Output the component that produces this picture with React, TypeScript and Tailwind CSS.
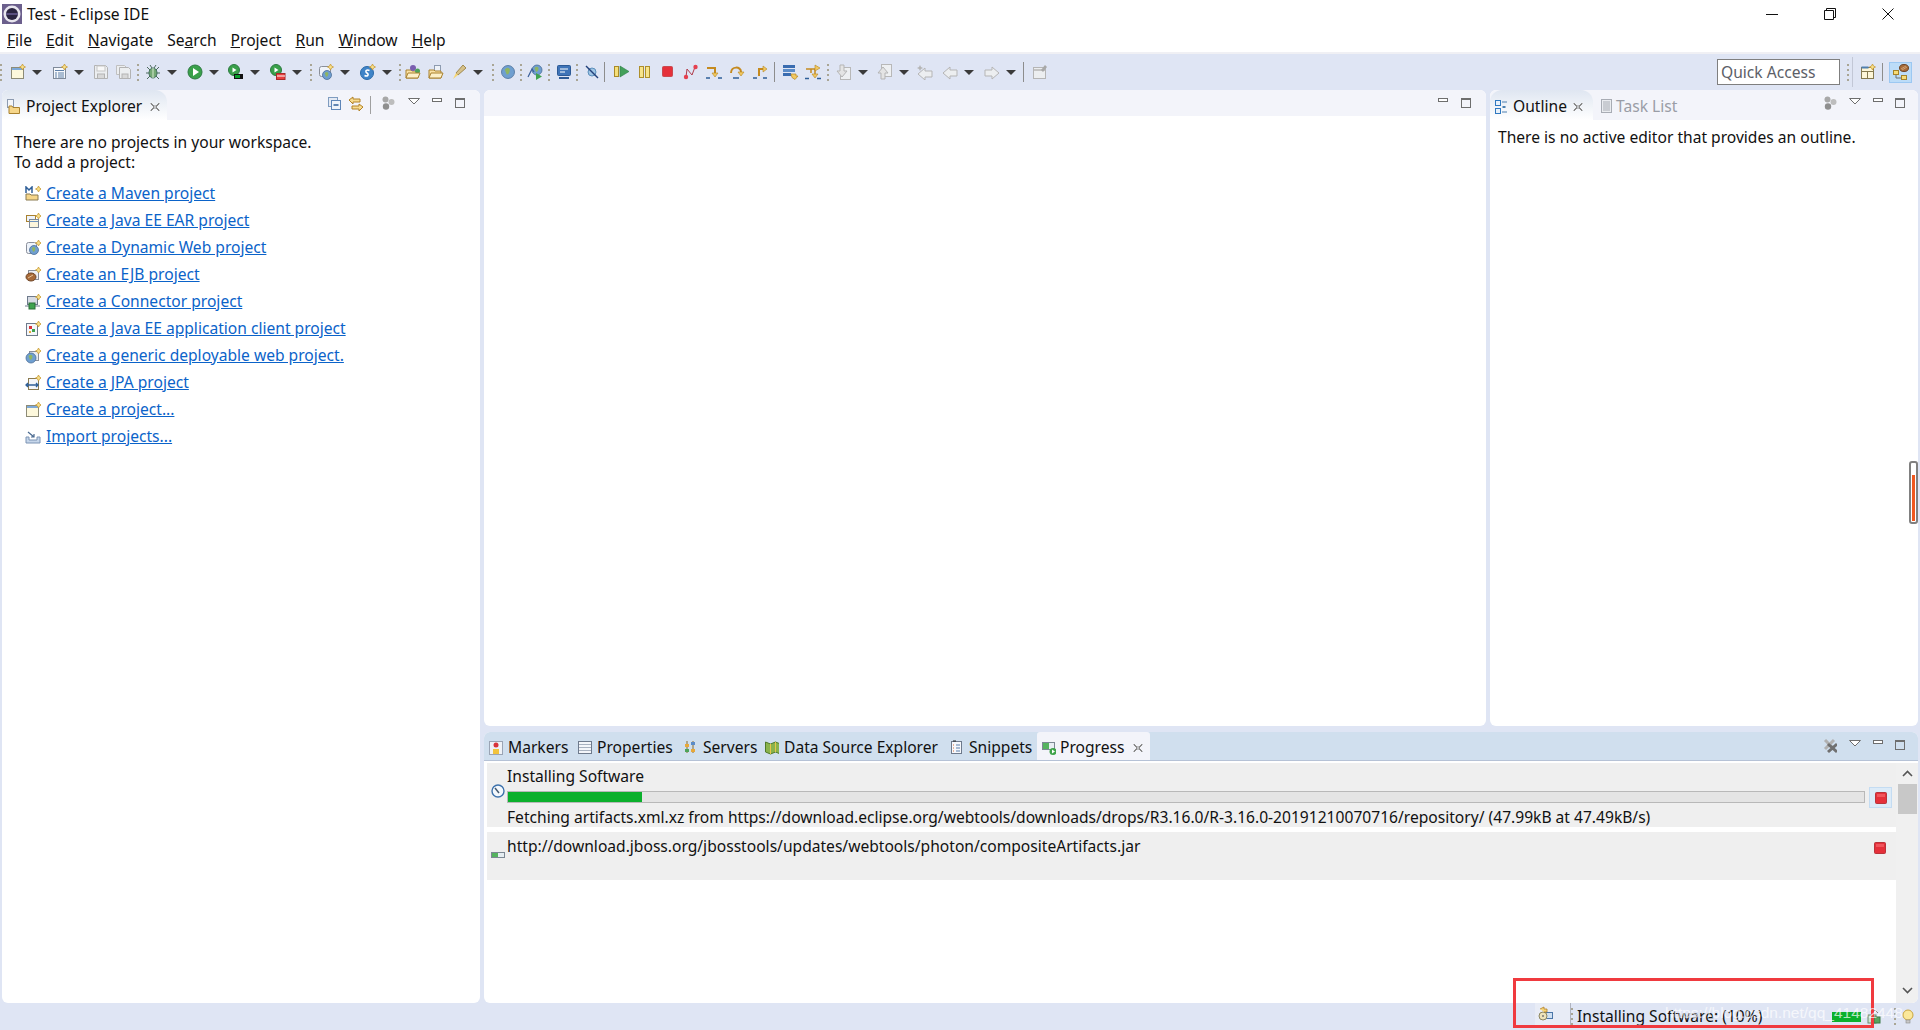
import React from "react";

const S = ({ w = 16, h = 16, children }: { w?: number; h?: number; children?: React.ReactNode }) => (
  <svg width={w} height={h} viewBox={`0 0 ${w} ${h}`} className="shrink-0 block">
    {children}
  </svg>
);

const Star = ({ x = 0, y = 0 }: { x?: number; y?: number }) => (
  <path
    transform={`translate(${x} ${y})`}
    d="M12.5 0l1 2 2 1-2 1-1 2-1-2-2-1 2-1z"
    fill="#f8e08a"
    stroke="#c4932a"
    strokeWidth=".7"
  />
);

const Globe = ({ cx = 8, cy = 8, r = 6 }: { cx?: number; cy?: number; r?: number }) => (
  <g>
    <circle cx={cx} cy={cy} r={r} fill="#6f9fd0" stroke="#4b6f98" strokeWidth=".8" />
    <path d={`M${cx - r * 0.5} ${cy - r * 0.4}q${r * 0.5} ${-r * 0.5} ${r * 0.8} 0q0 ${r * 0.7} ${-r * 0.5} ${r * 0.8}z`} fill="#8fb562" />
  </g>
);

const Stop = () => (
  <S w={12} h={12}>
    <rect x=".5" y=".5" width="11" height="11" rx="1" fill="#e5303a" stroke="#b9333a" />
    <rect x="2" y="2" width="8" height="3" fill="#f0555c" />
  </S>
);

const icons: Record<string, React.ReactNode> = {
  newWin: (
    <>
      <rect x="1.5" y="3.5" width="12" height="11" fill="#fdf8dc" stroke="#8d8b76" />
      <rect x="2" y="4" width="11" height="2" fill="#7ea9d8" />
      <Star />
    </>
  ),
  newForm: (
    <>
      <rect x="1.5" y="3.5" width="12" height="11" fill="#f6f8fc" stroke="#7f8a9a" />
      <path d="M3 6.5h9M6 9h6M6 11h6M6 13h6M3 9h2M3 11h2M3 13h2" stroke="#5f80a8" />
      <Star />
    </>
  ),
  save: (
    <>
      <path d="M1.5 1.5h11l2 2v11h-13z" fill="#eceef0" stroke="#b3b3b3" />
      <rect x="4" y="2" width="8" height="5" fill="#f8f8f8" stroke="#c6c6c6" />
      <rect x="4.500" y="10" width="7" height="4.500" fill="#d8d8d8" stroke="#b3b3b3" />
    </>
  ),
  saveAll: (
    <>
      <path d="M.5 1.500h8l2 2v7h-10z" fill="#eceef0" stroke="#c0c0c0" />
      <path d="M3.500 3.500h9l2 2v9h-11z" fill="#eceef0" stroke="#b3b3b3" />
      <rect x="6" y="10" width="6" height="4.500" fill="#d8d8d8" stroke="#b3b3b3" />
    </>
  ),
  bug: (
    <>
      <path d="M2 3l3 3M14 3l-3 3M1 9h3M15 9h-3M2 15l3-3M14 15l-3-3M5 1l2 3M11 1L9 4" stroke="#4d6a5e" strokeWidth="1" />
      <ellipse cx="8" cy="9" rx="4" ry="5" fill="#74a873" stroke="#3f6e58" />
      <path d="M8 4v10" stroke="#d8ead0" />
    </>
  ),
  run: (
    <>
      <circle cx="8" cy="8" r="7" fill="#39a04a" stroke="#2c7a41" />
      <path d="M6 4l6 4-6 4z" fill="#fff" />
    </>
  ),
  runExt: (
    <>
      <circle cx="6" cy="6" r="5.500" fill="#39a04a" stroke="#2c7a41" />
      <path d="M4.500 3.500l4 2.500-4 2.500z" fill="#fff" />
      <rect x="6" y="10" width="9" height="5" fill="#111" />
      <rect x="7" y="11" width="5" height="3" fill="#0aa02c" />
    </>
  ),
  runTool: (
    <>
      <circle cx="6" cy="6" r="5.500" fill="#39a04a" stroke="#2c7a41" />
      <path d="M4.500 3.500l4 2.500-4 2.500z" fill="#fff" />
      <rect x="6.500" y="9.500" width="8.500" height="6" fill="#e8403f" stroke="#a82a2a" />
      <path d="M7 12h8" stroke="#fff" />
    </>
  ),
  newWeb: (
    <>
      <rect x="1.500" y="2.500" width="11" height="10" fill="#f0f4fa" stroke="#8a8f9a" rx="2" />
      <Globe cx={9} cy={11} r={4.500} />
      <Star />
    </>
  ),
  newS: (
    <>
      <circle cx="7" cy="9" r="6.500" fill="#3f84c8" stroke="#2b6aa8" />
      <path d="M9.500 6.500c-3-1.500-5 1-2.500 2.500s.5 4-2.500 2.500" fill="none" stroke="#fff" strokeWidth="1.500" />
      <Star />
    </>
  ),
  openType: (
    <>
      <path d="M1 6h5l1 1h6v7H1z" fill="#fbe2a4" stroke="#a9812f" />
      <circle cx="8" cy="4" r="3" fill="#7a5fb0" />
      <circle cx="12.500" cy="7" r="2.500" fill="#4fa35a" />
      <path d="M1 14l2-5h12l-2 5z" fill="#fdf0c8" stroke="#a9812f" />
    </>
  ),
  openFile: (
    <>
      <rect x="6.500" y="1.500" width="6" height="6" fill="#eef2f8" stroke="#8d9bb0" />
      <path d="M1 6h5l1 1h6v7H1z" fill="#fbe2a4" stroke="#a9812f" />
      <path d="M1 14l2-5h12l-2 5z" fill="#fdf0c8" stroke="#a9812f" />
    </>
  ),
  torch: (
    <>
      <path d="M5 9l7-8 3 3-8 7z" fill="#d6c18a" stroke="#a08a50" />
      <path d="M5 9l2 2-5 4z" fill="#f7d670" />
    </>
  ),
  globe: <Globe r={6.500} />,
  globeRun: (
    <>
      <Globe cx={10} cy={6} r={5} />
      <path d="M1 13l4-8 2 3" fill="none" stroke="#3a5f9a" strokeWidth="1.200" />
      <path d="M9 9l6 3.500-6 3.500z" fill="#3fa34f" />
    </>
  ),
  monitor: (
    <>
      <rect x="1.500" y="1.500" width="13" height="10" rx="1" fill="#3f74b8" stroke="#2d5a96" />
      <path d="M4 5h8M4 8h5" stroke="#fff" />
      <path d="M3 14h10" stroke="#2d5a96" strokeWidth="2" />
    </>
  ),
  skip: (
    <>
      <circle cx="8" cy="8" r="4" fill="#9fc4e4" stroke="#5b8fbc" />
      <path d="M2 2l12 12" stroke="#22407a" strokeWidth="1.400" />
    </>
  ),
  resume: (
    <>
      <rect x=".5" y="2.500" width="4" height="10" fill="#f6e07a" stroke="#a98a28" />
      <path d="M6 2l9 5.500L6 13z" fill="#43a05a" stroke="#2f7d48" strokeWidth=".6" />
    </>
  ),
  pause: (
    <>
      <rect x=".5" y="2.500" width="4" height="11" fill="#f8e48a" stroke="#ae8f2b" />
      <rect x="6.500" y="2.500" width="4" height="11" fill="#f8e48a" stroke="#ae8f2b" />
    </>
  ),
  stop: <rect x=".5" y="2.500" width="10" height="10" rx="1" fill="#e5303a" stroke="#c94a50" />,
  disconnect: (
    <>
      <path d="M3 13l1-8 5 6 3-8" fill="none" stroke="#b03a4a" />
      <circle cx="3" cy="13" r="2.200" fill="#e5404f" />
      <circle cx="12.500" cy="3" r="2.200" fill="#e5404f" />
    </>
  ),
  into: (
    <>
      <path d="M1 4h8v6" fill="none" stroke="#c58a1f" strokeWidth="2" />
      <path d="M6 9h6l-3 4z" fill="#f2c860" stroke="#b5861f" strokeWidth=".6" />
      <path d="M0 14h4M12 14h4" stroke="#2f5f98" strokeWidth="1.500" />
    </>
  ),
  over: (
    <>
      <path d="M2 9C2 2 12 2 12 8" fill="none" stroke="#c58a1f" strokeWidth="2" />
      <path d="M9 8h6l-3 4z" fill="#f2c860" stroke="#b5861f" strokeWidth=".6" />
      <path d="M4 14h6" stroke="#2f5f98" strokeWidth="1.500" />
    </>
  ),
  ret: (
    <>
      <path d="M7 12V5h5" fill="none" stroke="#c58a1f" strokeWidth="2" />
      <path d="M11 2v6l4-3z" fill="#f2c860" stroke="#b5861f" strokeWidth=".6" />
      <path d="M1 14h4M11 14h4" stroke="#2f5f98" strokeWidth="1.500" />
    </>
  ),
  drop: (
    <>
      <rect x="0" y="1" width="12" height="3" fill="#3a6cb0" />
      <rect x="0" y="5" width="12" height="3" fill="#5b8cc8" />
      <rect x="0" y="9" width="8" height="3" fill="#3a6cb0" />
      <path d="M8 10h5v2h2l-3 3.500-3-2z" fill="#f2c860" stroke="#b5861f" strokeWidth=".7" />
    </>
  ),
  filter: (
    <>
      <path d="M1 5h9v7M6 5v4" fill="none" stroke="#c58a1f" strokeWidth="1.500" />
      <path d="M10 1l5 3-5 3z" fill="#f2c860" stroke="#b5861f" strokeWidth=".6" />
      <path d="M7 10h6l-3 4z" fill="#f2c860" stroke="#b5861f" strokeWidth=".6" />
      <path d="M0 14.500h4M12 14.500h4" stroke="#2f5f98" strokeWidth="1.500" />
    </>
  ),
  nextAnn: (
    <>
      <rect x="4.500" y="3.500" width="10" height="12" fill="#eef0f2" stroke="#b8b8b8" />
      <path d="M4 1h4v6h3l-5 6-5-6h3z" fill="#e4e4e4" stroke="#b5b5b5" />
    </>
  ),
  prevAnn: (
    <>
      <rect x="4.500" y=".5" width="10" height="12" fill="#eef0f2" stroke="#b8b8b8" />
      <path d="M4 15h4V9h3L6 3 1 9h3z" fill="#e4e4e4" stroke="#b5b5b5" />
    </>
  ),
  lastEdit: (
    <>
      <path d="M8 4v3h7v6H8v3L1 10z" fill="#eceef0" stroke="#b5b5b5" />
      <path d="M3 1l1 2 2 1-2 1-1 2-1-2-2-1 2-1z" fill="#b5b5b5" />
    </>
  ),
  back: <path d="M8 3v3h7v6H8v3L1 9z" fill="#eceef0" stroke="#b5b5b5" />,
  fwd: <path d="M8 3v3H1v6h7v3l7-6z" fill="#eceef0" stroke="#b5b5b5" />,
  pin: (
    <>
      <rect x="1.500" y="3.500" width="12" height="11" fill="#eceef0" stroke="#b5b5b5" />
      <path d="M2 6h11" stroke="#c4c4c4" strokeWidth="2" />
      <path d="M9 6l4-5 2 2-4 5z" fill="#a8a8a8" />
    </>
  ),
  perspective: (
    <>
      <rect x="1.500" y="3.500" width="12" height="11" fill="#fdf6d8" stroke="#857a50" />
      <path d="M1.500 7.500h12M7.500 7.500v7" stroke="#857a50" />
      <path d="M1.500 3.500h7" stroke="#4f7fb0" strokeWidth="2" />
      <Star />
    </>
  ),
  javaEE: (
    <>
      <rect x=".5" y="6.500" width="5" height="4" fill="#f6dc78" stroke="#a5832a" />
      <rect x="8.500" y="11.500" width="5" height="4" fill="#f6dc78" stroke="#a5832a" />
      <path d="M3 11v3h5" fill="none" stroke="#6e6e6e" />
      <ellipse cx="11" cy="4" rx="4.500" ry="3.500" fill="#a86a38" stroke="#6e4526" />
      <path d="M8 5l5-3M9 6l5-3" stroke="#e5c49a" strokeWidth=".6" />
    </>
  ),
  collapse: (
    <>
      <rect x=".5" y="1.500" width="9" height="9" fill="#e4eaf4" stroke="#7f9cc0" />
      <rect x="3.500" y="4.500" width="9" height="9" fill="#eef3fa" stroke="#5e86b8" />
      <path d="M5.500 9h5" stroke="#2f5f98" strokeWidth="1.400" />
    </>
  ),
  link: (
    <>
      <path d="M1 4l4-3v2h7v3H5v2z" fill="#f8dc90" stroke="#b28226" />
      <path d="M15 11l-4-3v2H4v3h7v2z" fill="#f8dc90" stroke="#b28226" />
    </>
  ),
  cluster: (
    <>
      <circle cx="4.500" cy="3.500" r="3" fill="#a8a8a8" />
      <circle cx="10.500" cy="6" r="3" fill="#bdbdbd" />
      <circle cx="5" cy="10.500" r="3.200" fill="#8f8f8f" />
    </>
  ),
  clearX: (
    <>
      <path d="M2 2l9 9M11 2l-9 9" stroke="#b0b0b0" strokeWidth="3" />
      <path d="M5 6l9 8M14 6l-9 8" stroke="#707070" strokeWidth="3" />
    </>
  ),
  peFolder: (
    <>
      <rect x="1.500" y=".5" width="6" height="8" fill="#f4f6fa" stroke="#8d9bb0" />
      <path d="M3 7h3l1 1.500h6.500V14.500H3z" fill="#f6d68a" stroke="#a9812f" />
    </>
  ),
  outline: (
    <>
      <rect x=".5" y="1.500" width="5" height="5" fill="#e8f1fa" stroke="#2f78c0" />
      <rect x=".5" y="9.500" width="5" height="5" fill="#e8f1fa" stroke="#2f78c0" />
      <path d="M7 3h5M7 13h5" stroke="#4a7fb0" />
      <rect x="7.500" y="7" width="3" height="2" fill="#4a7fb0" />
    </>
  ),
  taskList: (
    <>
      <rect x="2.500" y=".5" width="10" height="13" fill="#eaecf0" stroke="#a8acb4" />
      <path d="M4 3h7M4 5h7M4 7h7M4 9h7M4 11h7" stroke="#a8acb4" />
    </>
  ),
  markers: (
    <>
      <rect x=".5" y="1.500" width="13" height="13" fill="#eef1f6" stroke="#9aa4b4" />
      <circle cx="7" cy="5" r="2.500" fill="#d8333a" />
      <rect x="4" y="9" width="6" height="5" fill="#f2c33c" />
    </>
  ),
  properties: (
    <>
      <rect x=".5" y="1.500" width="13" height="12" fill="#f4f6fa" stroke="#6e7a8c" />
      <path d="M1 4.500h12M1 7.500h12M1 10.500h12" stroke="#a8b2c0" />
    </>
  ),
  servers: (
    <>
      <path d="M3 1v12M9 1v12" stroke="#8a6a2a" />
      <rect x="1" y="4" width="4" height="3" fill="#e8a83a" />
      <rect x="7" y="2" width="4" height="3" fill="#5b8cc8" />
      <rect x="1" y="9" width="4" height="3" fill="#4fa35a" />
      <rect x="7" y="9" width="4" height="3" fill="#e8a83a" />
    </>
  ),
  dse: (
    <>
      <path d="M.5 2l5 2 5-2 5 2v10l-5-2-5 2-5-2z" fill="#8ab34c" stroke="#4f7a2a" />
      <path d="M5.500 4v10M10.500 2v10" stroke="#e7c64a" />
    </>
  ),
  snippets: (
    <>
      <rect x="1.500" y="1.500" width="10" height="12" fill="#f6f8fc" stroke="#6e7a8c" />
      <path d="M3 1h3" stroke="#222" />
      <path d="M6 5h4M6 8h4M6 11h4" stroke="#5b7faa" />
      <path d="M3 5h1M3 8h1M3 11h1" stroke="#d8703a" />
    </>
  ),
  progress: (
    <>
      <rect x=".5" y="2.500" width="12" height="7" fill="#e8eef4" stroke="#7c8894" />
      <rect x="1" y="3" width="6" height="6" fill="#55b35f" />
      <circle cx="11" cy="11.500" r="3.500" fill="#3ea34a" />
      <path d="M10 9.500l3 2-3 2z" fill="#fff" />
    </>
  ),
  clock: (
    <>
      <circle cx="7" cy="7" r="6" fill="#f4f8fc" stroke="#3e72ac" strokeWidth="1.400" />
      <path d="M4 4l4 5" stroke="#44596f" strokeWidth="1.500" />
    </>
  ),
  rowBar: (
    <>
      <rect x=".5" y="6.500" width="13" height="5" fill="#e6eef2" stroke="#7c8894" />
      <rect x="1" y="7" width="6" height="4" fill="#55b35f" />
    </>
  ),
  bgTasks: (
    <>
      <rect x="6.500" y="6.500" width="8" height="6" fill="#cfe0f2" stroke="#4b76a8" />
      <circle cx="5" cy="10" r="4" fill="#eee2b8" stroke="#8a8560" />
      <circle cx="5" cy="10" r="1" fill="#777" />
      <path d="M2 3l4-2v2h3v3H6" fill="#f6d478" stroke="#b28226" strokeWidth=".8" />
    </>
  ),
  trim: (
    <>
      <rect x="1" y="6" width="8" height="8" fill="#cfe3d0" stroke="#6b8a70" />
      <rect x="7" y="8" width="6" height="6" fill="#55a35f" stroke="#3a7a45" />
      <path d="M5 4l3-3 3 3" fill="none" stroke="#808080" />
    </>
  ),
  bulb: (
    <>
      <circle cx="7" cy="6" r="5" fill="#fbe89a" stroke="#c9a540" />
      <rect x="5" y="11" width="4" height="3" fill="#c8c8c8" stroke="#8a8a8a" strokeWidth=".6" />
    </>
  ),
  maven: (
    <>
      <path d="M1 8h4l1 1h7v5H1z" fill="#f6d68a" stroke="#8a7a50" />
      <path d="M1 7V1l3 3 3-3v6" fill="none" stroke="#2f5f98" strokeWidth="1.500" />
      <Star x={1} />
    </>
  ),
  ear: (
    <>
      <rect x="1.500" y="2.500" width="9" height="6" fill="#eef3fa" stroke="#a9812f" />
      <rect x="4.500" y="6.500" width="9" height="8" fill="#fdf6dc" stroke="#7e8a98" />
      <path d="M5 8.500h8" stroke="#6e94c0" />
      <Star x={1} />
    </>
  ),
  web: (
    <>
      <rect x="1.500" y="2.500" width="10" height="11" fill="#eef3fa" stroke="#8a8f9a" rx="2" />
      <Globe cx={9} cy={10} r={4.500} />
      <Star x={1} />
    </>
  ),
  ejb: (
    <>
      <rect x="3.500" y="3.500" width="10" height="9" fill="#eef0f4" stroke="#8a8f9a" />
      <ellipse cx="6" cy="10" rx="5" ry="4" fill="#a86a38" stroke="#6e4526" />
      <path d="M3 11l5-3" stroke="#e5c49a" />
      <Star x={1} />
    </>
  ),
  conn: (
    <>
      <rect x="2.500" y="2.500" width="10" height="8" fill="#d8dce4" stroke="#6e7a8c" />
      <path d="M0 12h15" stroke="#6e7a8c" />
      <rect x="4" y="9" width="6" height="6" fill="#3fa34f" stroke="#2a6e38" />
      <Star x={1} />
    </>
  ),
  client: (
    <>
      <rect x="1.500" y="2.500" width="11" height="12" fill="#f4f6fa" stroke="#6e7a8c" />
      <rect x="4" y="5" width="3" height="3" fill="#d8333a" />
      <rect x="7" y="8" width="3" height="3" fill="#3fa34f" />
      <rect x="4" y="10" width="2" height="2" fill="#e8a83a" />
      <Star x={1} />
    </>
  ),
  generic: (
    <>
      <rect x="4.500" y="3.500" width="9" height="9" fill="#e8ecf2" stroke="#8a8f9a" />
      <Globe cx={6} cy={10} r={5} />
      <Star x={1} />
    </>
  ),
  jpa: (
    <>
      <rect x="3.500" y="3.500" width="10" height="11" fill="#f4f6fa" stroke="#8a7a50" />
      <path d="M1 10h12M3 8l-2 2 2 2M11 8l2 2-2 2" fill="none" stroke="#2f5f98" strokeWidth="1.300" />
      <Star x={1} />
    </>
  ),
  project: (
    <>
      <rect x="1.500" y="3.500" width="12" height="11" fill="#fdf8dc" stroke="#8d8b76" />
      <rect x="2" y="4" width="11" height="2" fill="#7ea9d8" />
      <Star x={1} />
    </>
  ),
  importP: (
    <>
      <path d="M1 8h3v3h8V8h3v6H1z" fill="#c6d6ea" stroke="#7c94b4" />
      <path d="M3 3l6 5M9 5v3H6" fill="none" stroke="#4a6a90" strokeWidth="1.200" />
    </>
  ),
};

const I = ({ n, w = 16, h = 16 }: { n: string; w?: number; h?: number }) => <S w={w} h={h}>{icons[n]}</S>;

const Arrow = () => (
  <span className="ml-[6px] block h-0 w-0 border-x-[5px] border-t-[5px] border-x-transparent border-t-[#3a3a3a]" />
);

const Grip = ({ w }: { w: string }) => (
  <div className={`${w} flex h-[24px] shrink-0 flex-col justify-center gap-[3px]`}>
    {[0, 1, 2, 3].map((d) => (
      <span key={d} className="h-[2px] w-[2px] bg-[#a9a594]" />
    ))}
  </div>
);

const Sep = ({ w }: { w: string }) => (
  <div className={`${w} h-[20px] shrink-0`}>
    <div className="h-full w-px bg-[#8d8d8d]" />
  </div>
);

type Tool = ["g" | "s" | "i" | "a", string, string?];

const tools: Tool[] = [
  ["g", "w-[10px]"],
  ["a", "w-[42px]", "newWin"],
  ["a", "w-[41px]", "newForm"],
  ["i", "w-[23px]", "save"],
  ["i", "w-[21px]", "saveAll"],
  ["g", "w-[8px]"],
  ["a", "w-[42px]", "bug"],
  ["a", "w-[41px]", "run"],
  ["a", "w-[42px]", "runExt"],
  ["a", "w-[40px]", "runTool"],
  ["g", "w-[8px]"],
  ["a", "w-[42px]", "newWeb"],
  ["a", "w-[39px]", "newS"],
  ["g", "w-[6px]"],
  ["i", "w-[23px]", "openType"],
  ["i", "w-[23px]", "openFile"],
  ["a", "w-[41px]", "torch"],
  ["g", "w-[8px]"],
  ["i", "w-[20px]", "globe"],
  ["g", "w-[7px]"],
  ["i", "w-[21px]", "globeRun"],
  ["g", "w-[8px]"],
  ["i", "w-[20px]", "monitor"],
  ["g", "w-[8px]"],
  ["i", "w-[20px]", "skip"],
  ["s", "w-[10px]"],
  ["i", "w-[25px]", "resume"],
  ["i", "w-[23px]", "pause"],
  ["i", "w-[21px]", "stop"],
  ["i", "w-[23px]", "disconnect"],
  ["i", "w-[23px]", "into"],
  ["i", "w-[23px]", "over"],
  ["i", "w-[22px]", "ret"],
  ["s", "w-[9px]"],
  ["i", "w-[22px]", "drop"],
  ["i", "w-[22px]", "filter"],
  ["g", "w-[9px]"],
  ["a", "w-[41px]", "nextAnn"],
  ["a", "w-[40px]", "prevAnn"],
  ["i", "w-[25px]", "lastEdit"],
  ["a", "w-[42px]", "back"],
  ["a", "w-[39px]", "fwd"],
  ["s", "w-[9px]"],
  ["i", "w-[20px]", "pin"],
];

const menus: [string, string, string][] = [
  ["", "F", "ile"],
  ["", "E", "dit"],
  ["", "N", "avigate"],
  ["Se", "a", "rch"],
  ["", "P", "roject"],
  ["", "R", "un"],
  ["", "W", "indow"],
  ["", "H", "elp"],
];

const links: [string, string][] = [
  ["maven", "Create a Maven project"],
  ["ear", "Create a Java EE EAR project"],
  ["web", "Create a Dynamic Web project"],
  ["ejb", "Create an EJB project"],
  ["conn", "Create a Connector project"],
  ["client", "Create a Java EE application client project"],
  ["generic", "Create a generic deployable web project."],
  ["jpa", "Create a JPA project"],
  ["project", "Create a project..."],
  ["importP", "Import projects..."],
];

const bottomTabs: [string, string, string][] = [
  ["markers", "Markers", "ml-[2px] w-[89px]"],
  ["properties", "Properties", "w-[106px]"],
  ["servers", "Servers", "w-[81px]"],
  ["dse", "Data Source Explorer", "w-[185px]"],
  ["snippets", "Snippets", "w-[90px]"],
];

const Close = () => (
  <svg width="10" height="10" viewBox="0 0 10 10" className="shrink-0">
    <path d="M1 1l3 3 2 0 3-3M1 9l3-3 2 0 3 3M1 1l0 1 3 3-3 3 0 1M9 1l0 1-3 3 3 3 0 1" fill="none" stroke="#8a8a8a" />
  </svg>
);

const MinMax = () => (
  <>
    <S w={10}>
      <rect x=".5" y="2.500" width="9" height="3" fill="#fff" stroke="#6e6e6e" />
    </S>
    <S w={10}>
      <rect x=".5" y="2.500" width="9" height="9" fill="none" stroke="#6e6e6e" />
      <path d="M1 3.500h8" stroke="#6e6e6e" />
    </S>
  </>
);

const Tri = () => (
  <S w={12}>
    <path d="M.5 2.500h11L6 8z" fill="#fff" stroke="#6e6e6e" />
  </S>
);

const ViewTools = ({ icon = "cluster" }: { icon?: string }) => (
  <div className="ml-auto flex items-start gap-[12px] pr-[13px] pt-[6px]">
    <I n={icon} w={14} />
    <Tri />
    <MinMax />
  </div>
);

export default function App() {
  return (
    <div className="relative flex h-[1030px] w-[1920px] flex-col overflow-hidden bg-[#dfe5f4] font-['Noto_Sans',sans-serif] text-[15.6px] text-[#111]">
      <div className="flex h-[27px] shrink-0 items-center bg-white pl-[2px]">
        <svg width="20" height="20" viewBox="0 0 20 20" className="shrink-0">
          <rect width="20" height="20" fill="#6b5f8c" />
          <circle cx="10" cy="10" r="8.500" fill="#e8e6ee" />
          <circle cx="10" cy="10" r="6" fill="#2a2440" />
          <path d="M4 9h12v2H4z" fill="#5a5080" />
        </svg>
        <span className="ml-[5px] pt-[2px]">Test - Eclipse IDE</span>
        <div className="ml-auto flex items-center gap-[46px] pr-[26px]">
          <S w={12} h={12}>
            <path d="M0 6.500h12" stroke="#111" />
          </S>
          <S w={12} h={12}>
            <path d="M.5 2.500h9v9h-9zM2.500 2.500v-2h9v9h-2" fill="none" stroke="#111" />
          </S>
          <S w={12} h={12}>
            <path d="M.5.500l11 11M11.500.500l-11 11" stroke="#111" />
          </S>
        </div>
      </div>

      <div className="flex h-[25px] shrink-0 items-center gap-[14px] bg-white pl-[7px] pt-[2px]">
        {menus.map(([a, u, b]) => (
          <span key={u + b}>
            {a}
            <span className="underline">{u}</span>
            {b}
          </span>
        ))}
      </div>

      <div className="flex h-[38px] shrink-0 items-center border-t-2 border-[#f0f0f4]">
        {tools.map(([kind, w, n], idx) => {
          if (kind === "g") return <Grip key={idx} w={w} />;
          if (kind === "s") return <Sep key={idx} w={w} />;
          return (
            <div key={idx} className={`${w} flex shrink-0 items-center`}>
              <I n={n as string} />
              {kind === "a" && <Arrow />}
            </div>
          );
        })}
        <div className="ml-auto flex items-center pr-[8px]">
          <div className="flex h-[26px] w-[123px] items-center border border-[#7f7f7f] bg-white pl-[3px] pt-[1px] text-[#5c6068]">
            Quick Access
          </div>
          <div className="ml-[7px] flex w-[13px] items-center">
            <Grip w="w-[5px]" />
            <div className="h-[30px] w-px bg-[#c2c7d6]" />
          </div>
          <I n="perspective" />
          <div className="mx-[6px] h-[18px] w-px bg-[#8d8d8d]" />
          <div className="flex h-[21px] w-[23px] items-center justify-center border border-[#9cc8f2] bg-[#bcdcf8]">
            <I n="javaEE" />
          </div>
        </div>
      </div>

      <div className="flex min-h-0 flex-1 gap-[4px] pl-[2px] pr-[2px]">
        <section className="flex w-[478px] shrink-0 flex-col overflow-hidden rounded-[6px] bg-white">
          <div className="flex h-[30px] shrink-0 bg-[#f3f4fa]">
            <div className="flex w-[165px] items-center gap-[4px] rounded-tr-[12px] bg-gradient-to-b from-[#dfe6f1] to-white pl-[4px] pt-[3px]">
              <I n="peFolder" />
              <span>Project Explorer</span>
              <span className="ml-[4px]">
                <Close />
              </span>
            </div>
            <div className="ml-auto flex items-start pr-[15px] pt-[6px]">
              <I n="collapse" />
              <div className="ml-[4px]">
                <I n="link" />
              </div>
              <div className="ml-[6px] h-[18px] w-px bg-[#a0a0a0]" />
              <div className="ml-[10px]">
                <I n="cluster" w={14} />
              </div>
              <div className="ml-[13px]">
                <Tri />
              </div>
              <div className="ml-[12px] flex gap-[13px]">
                <MinMax />
              </div>
            </div>
          </div>
          <div className="pl-[12px] pt-[12px] leading-[20px]">
            <p>There are no projects in your workspace.</p>
            <p>To add a project:</p>
          </div>
          <ul className="pl-[23px] pt-[8px]">
            {links.map(([n, t]) => (
              <li key={t} className="flex h-[27px] items-center gap-[5px]">
                <I n={n} />
                <a className="text-[#0b63c9] underline">{t}</a>
              </li>
            ))}
          </ul>
        </section>

        <div className="flex min-w-0 flex-1 flex-col gap-[6px]">
          <div className="flex h-[636px] shrink-0 gap-[4px]">
            <section className="flex w-[1002px] shrink-0 flex-col overflow-hidden rounded-[6px] bg-white">
              <div className="flex h-[26px] shrink-0 bg-[#f3f4fa]">
                <div className="ml-auto flex items-start gap-[13px] pr-[15px] pt-[6px]">
                  <MinMax />
                </div>
              </div>
            </section>
            <section className="flex min-w-0 flex-1 flex-col overflow-hidden rounded-[6px] bg-white">
              <div className="flex h-[30px] shrink-0 bg-[#f3f4fa]">
                <div className="flex w-[103px] items-center gap-[5px] rounded-t-[12px] bg-gradient-to-b from-[#dfe6f1] to-white pl-[5px] pt-[3px]">
                  <I n="outline" w={13} />
                  <span>Outline</span>
                  <span className="ml-[1px]">
                    <Close />
                  </span>
                </div>
                <div className="ml-[6px] flex items-center gap-[3px] pt-[3px] text-[#9a9da6]">
                  <I n="taskList" w={14} />
                  <span>Task List</span>
                </div>
                <ViewTools />
              </div>
              <p className="pl-[8px] pt-[7px] leading-[20px]">There is no active editor that provides an outline.</p>
            </section>
          </div>

          <section className="flex min-h-0 flex-1 flex-col overflow-hidden rounded-[6px] bg-white">
            <div className="flex h-[29px] shrink-0 border-b border-[#b6c2d6] bg-[#d0dfee]">
              {bottomTabs.map(([n, t, w]) => (
                <div key={t} className={`${w} flex shrink-0 items-center gap-[5px] pl-[3px] pt-[3px]`}>
                  <I n={n} w={14} />
                  <span>{t}</span>
                </div>
              ))}
              <div className="flex w-[113px] shrink-0 items-center gap-[4px] rounded-t-[3px] bg-[#f3f4fa] pl-[5px] pt-[3px]">
                <I n="progress" w={14} />
                <span>Progress</span>
                <span className="ml-[5px]">
                  <Close />
                </span>
              </div>
              <ViewTools icon="clearX" />
            </div>
            <div className="flex min-h-0 flex-1 pt-[2px]">
              <div className="flex min-w-0 flex-1 flex-col gap-[5px] pl-[3px]">
                <div className="flex h-[64px] shrink-0 bg-[#efefef]">
                  <div className="flex w-[20px] shrink-0 items-center pb-[6px] pl-[4px]">
                    <I n="clock" w={14} />
                  </div>
                  <div className="min-w-0 flex-1 pt-[3px]">
                    <p className="leading-[20px]">Installing Software</p>
                    <div className="mt-[5px] h-[12px] border border-[#b8b8b8] bg-[#e4e4e4]">
                      <div className="h-full w-[134px] bg-[#0bb02c]" />
                    </div>
                    <p className="mt-[5px] whitespace-nowrap leading-[18px]">
                      Fetching artifacts.xml.xz from https://download.eclipse.org/webtools/downloads/drops/R3.16.0/R-3.16.0-20191210070716/repository/ (47.99kB at 47.49kB/s)
                    </p>
                  </div>
                  <div className="flex w-[31px] shrink-0 justify-start pl-[4px] pt-[24px]">
                    <div className="flex h-[21px] w-[23px] items-center justify-center border border-[#c4dcf2] bg-[#dcebf8]">
                      <Stop />
                    </div>
                  </div>
                </div>
                <div className="flex h-[48px] shrink-0 bg-[#efefef]">
                  <div className="w-[20px] shrink-0 pl-[4px] pt-[14px]">
                    <I n="rowBar" w={14} />
                  </div>
                  <p className="min-w-0 flex-1 pt-[4px] leading-[20px]">
                    http://download.jboss.org/jbosstools/updates/webtools/photon/compositeArtifacts.jar
                  </p>
                  <div className="w-[31px] shrink-0 pl-[9px] pt-[10px]">
                    <Stop />
                  </div>
                </div>
              </div>
              <div className="flex w-[22px] shrink-0 flex-col items-center bg-[#f0f0f0]">
                <div className="flex h-[21px] items-center">
                  <svg width="11" height="7" viewBox="0 0 11 7">
                    <path d="M1 6l4.500-4.500L10 6" fill="none" stroke="#555" strokeWidth="1.600" />
                  </svg>
                </div>
                <div className="h-[30px] w-[19px] bg-[#c8c8c8]" />
                <div className="mt-auto flex h-[26px] items-center">
                  <svg width="11" height="7" viewBox="0 0 11 7">
                    <path d="M1 1l4.500 4.500L10 1" fill="none" stroke="#555" strokeWidth="1.600" />
                  </svg>
                </div>
              </div>
            </div>
          </section>
        </div>
      </div>

      <div className="flex h-[27px] shrink-0 items-center justify-end">
        <div className="flex h-[23px] w-[36px] items-center justify-start self-start border-r border-b border-[#b0b4c0] bg-[#e8ecf6] pl-[3px]">
          <I n="bgTasks" />
        </div>
        <div className="w-[6px]">
          <Grip w="w-[2px]" />
        </div>
        <span className="w-[255px] shrink-0 whitespace-nowrap pt-[1px]">Installing Software: (10%)</span>
        <div className="h-[10px] w-[29px] bg-[#0bb02c]" />
        <div className="ml-[6px]">
          <I n="trim" w={15} />
        </div>
        <div className="ml-[12px] w-[7px]">
          <Grip w="w-[2px]" />
        </div>
        <div className="mr-[5px]">
          <I n="bulb" w={14} />
        </div>
      </div>

      <div className="pointer-events-none absolute left-[1513px] top-[978px] h-[50px] w-[361px] border-[3px] border-[#f03a3f]" />
      <div className="pointer-events-none absolute left-[1665px] top-[1001px] whitespace-nowrap font-['Liberation_Sans',sans-serif] text-[15.5px] text-white/70">
        https://blog.csdn.net/qq_41482448
      </div>
      <div className="absolute left-[1909px] top-[461px] flex h-[63px] w-[9px] items-end justify-center rounded-[3px] border-2 border-[#808080] bg-white pb-[1px]">
        <div className="h-[46px] w-[3px] bg-[#f0581f]" />
      </div>
    </div>
  );
}
